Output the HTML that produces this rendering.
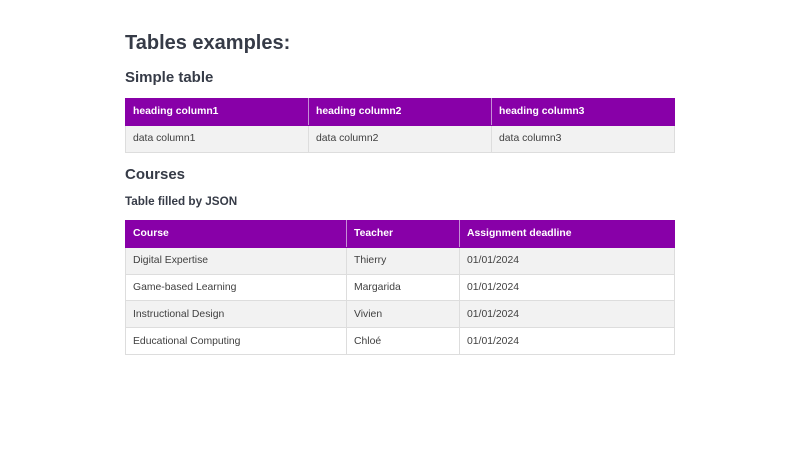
<!DOCTYPE html>
<html><head><meta charset="utf-8"><style>
body{margin:0;width:800px;height:450px;background:#fff;font-family:"Liberation Sans",sans-serif;color:#363b47;position:relative;overflow:hidden}
.a{position:absolute;left:125px;margin:0;font-weight:bold;white-space:nowrap}
table{position:absolute;left:125px;width:550px;border-collapse:collapse;font-size:10.4px}
td,th{height:26.8px;padding:0 0 0 7px;text-align:left;border:1px solid #ddd;box-sizing:border-box}
th{background:#8800a8;color:#fff;border-color:#8800a8;border-right-color:#c68fd6;font-weight:bold}
th:last-child{border-right-color:#8800a8}
tr:nth-child(even) td{background:#f2f2f2}
tr:nth-child(odd) td{background:#fff}
td{color:#404040}
</style></head><body>
<h1 class="a" style="top:32px;font-size:20px">Tables examples:</h1>
<h2 class="a" style="top:69px;font-size:15px">Simple table</h2>
<table style="top:98px">
<tr><th style="width:183px">heading column1</th><th style="width:183px">heading column2</th><th>heading column3</th></tr>
<tr><td>data column1</td><td>data column2</td><td>data column3</td></tr>
</table>
<h2 class="a" style="top:166px;font-size:15px">Courses</h2>
<h3 class="a" style="top:195px;font-size:11.7px">Table filled by JSON</h3>
<table style="top:220px">
<tr><th style="width:221px">Course</th><th style="width:113px">Teacher</th><th>Assignment deadline</th></tr>
<tr><td>Digital Expertise</td><td>Thierry</td><td>01/01/2024</td></tr>
<tr><td>Game-based Learning</td><td>Margarida</td><td>01/01/2024</td></tr>
<tr><td>Instructional Design</td><td>Vivien</td><td>01/01/2024</td></tr>
<tr><td>Educational Computing</td><td>Chloé</td><td>01/01/2024</td></tr>
</table>
</body></html>
